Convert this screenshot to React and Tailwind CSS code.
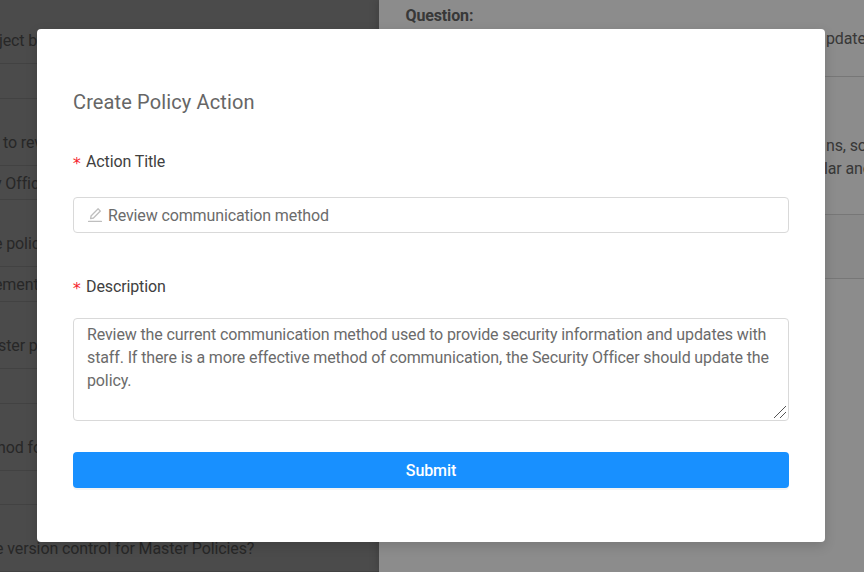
import React, { useState } from 'react';
import { AiOutlineEdit } from 'react-icons/ai';

const policyRows = [
  { question: 'ject by', questionOffset: '-ml-[1px]' },
  { question: 'to review', questionOffset: 'ml-[3px]', answer: 'y Officer', answerOffset: '-ml-[6px]' },
  { question: 'e policy', questionOffset: '-ml-[6px]', answer: 'ement', answerOffset: '-ml-[6px]' },
  { question: 'ster policy', questionOffset: '-ml-[2px]' },
  { question: 'hod for', questionOffset: '-ml-[3px]' },
  { question: 'e version control for Master Policies?', questionOffset: '-ml-[5px]' },
];

const PolicyList = () => (
  <div className="w-[379px] shrink-0 bg-[#898989] overflow-hidden tracking-[-0.11px] text-[#484848]">
    {/* Pull the list up so that it starts mid-row, as if scrolled */}
    <div className="-mt-[2.8px]">
      {policyRows.map((row) => (
        <div key={row.question} className="h-[101.6px] flex flex-col whitespace-nowrap">
          <div className="h-[67px] border-b border-[#787878] flex items-end pb-[10px]">
            <span className={row.questionOffset}>{row.question}</span>
          </div>
          <div className="flex-1 border-b border-[#787878] flex items-center pt-[2px]">
            {row.answer && <span className={row.answerOffset}>{row.answer}</span>}
          </div>
        </div>
      ))}
    </div>
  </div>
);

const DetailPanel = () => (
  <div className="relative flex-1 bg-white shadow-[-2px_0_8px_rgba(0,0,0,0.15)] overflow-hidden whitespace-nowrap tracking-[-0.13px] text-[#666]">
    <div className="h-[77px] border-b border-[#d9d9d9] pt-1 pl-[26.5px]">
      <h3 className="font-bold leading-[23px]">Question:</h3>
      <p className="leading-[23px] pl-[420.5px]">pdates</p>
    </div>
    <div className="h-[138px] border-b border-[#d9d9d9] pt-[57px] pl-[447px] leading-[23px]">
      <p>ns, so</p>
      <p className="-ml-[2px]">lar and</p>
    </div>
    <div className="h-16 border-b border-[#d9d9d9] bg-[#fafafa]" />
  </div>
);

const FieldLabel = ({ htmlFor, children }) => (
  <label htmlFor={htmlFor} className="flex items-center h-[26px] -mb-[2px] tracking-[-0.12px] text-[#404040]">
    <span className="w-[13px] -ml-px mr-px pt-[3px] text-base leading-none text-[#f5222d] font-['DejaVu_Sans_Mono',monospace]">*</span>
    {children}
  </label>
);

const CreatePolicyAction = () => {
  const [title, setTitle] = useState('Review communication method');
  const [description, setDescription] = useState(
    'Review the current communication method used to provide security information and updates with staff. If there is a more effective method of communication, the Security Officer should update the policy.'
  );

  return (
    <form
      onSubmit={(e) => e.preventDefault()}
      className="w-[788px] h-[513px] rounded bg-white px-9 pt-[58px] shadow-[0_4px_12px_rgba(0,0,0,0.15)]"
    >
      <h2 className="text-xl leading-[30px] tracking-[0.13px] text-[#666]">Create Policy Action</h2>

      <div className="mt-8">
        <FieldLabel htmlFor="title">Action Title</FieldLabel>
        <div className="mt-6 h-9 flex items-center gap-1 rounded border border-[#d9d9d9] px-3">
          <AiOutlineEdit className="w-[18px] h-[18px] shrink-0 text-[#bfbfbf]" />
          <input
            id="title"
            value={title}
            onChange={(e) => setTitle(e.target.value)}
            className="flex-1 pt-[2px] outline-none tracking-[-0.13px] text-[#6b6b6b]"
          />
        </div>
      </div>

      <div className="mt-[41px]">
        <FieldLabel htmlFor="description">Description</FieldLabel>
        <div className="relative mt-5">
          <textarea
            id="description"
            value={description}
            onChange={(e) => setDescription(e.target.value)}
            className="block w-full h-[103px] resize-none rounded border border-[#d9d9d9] px-[13px] py-1 leading-[23px] tracking-[-0.125px] text-[#6b6b6b] outline-none overflow-hidden"
          />
          {/* Resize grip */}
          <svg
            className="absolute right-[3px] bottom-[3px] w-3 h-3 pointer-events-none"
            viewBox="0 0 12 12"
            fill="none"
            stroke="#555"
          >
            <path d="M0 12L12 0M6 12L12 6" />
          </svg>
        </div>
      </div>

      <button
        type="submit"
        className="mt-[31px] w-full h-9 pt-[2px] rounded bg-[#1890ff] font-medium tracking-[-0.1px] text-white shadow-[0_2px_0_rgba(0,0,0,0.045)]"
      >
        Submit
      </button>
    </form>
  );
};

const App = () => (
  <div className="relative w-[864px] h-[572px] overflow-hidden font-[Roboto,sans-serif] text-base">
    <div className="flex h-full">
      <PolicyList />
      <DetailPanel />
    </div>

    {/* Modal over the dimmed page */}
    <div className="absolute inset-0 bg-black/45 pl-[37px] pt-[29px]">
      <CreatePolicyAction />
    </div>
  </div>
);

export default App;
